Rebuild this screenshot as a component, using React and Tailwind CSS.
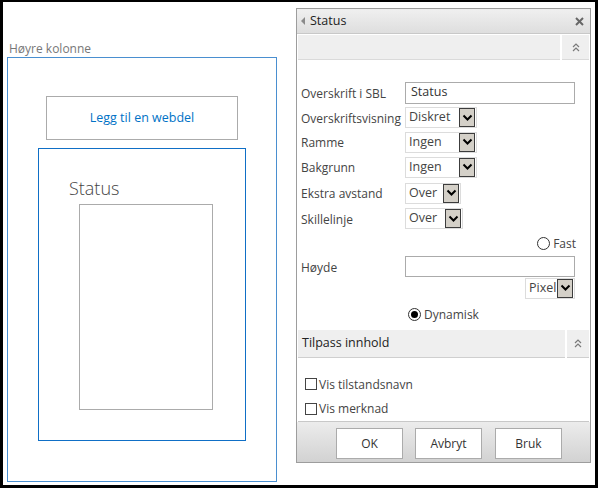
import React from "react";

const F = "font-['Open_Sans',sans-serif]";

function Chevrons() {
  return (
    <svg width="8" height="9" viewBox="0 0 8 9" fill="none" stroke="#7a7a7a" strokeWidth="1.2">
      <polyline points="1,4 4,1 7,4" />
      <polyline points="1,8 4,5 7,8" />
    </svg>
  );
}

function Select({ value, w }) {
  return (
    <div className={`flex h-[21px] items-center border border-[#dcdcdc] bg-white pl-[3px] pr-[1px] ${w}`}>
      <span className="flex-1 text-[12.5px] leading-none text-[#444]">{value}</span>
      <div className="flex h-[19px] w-[16px] items-center justify-center border border-[#3c3c3c] bg-[#d4d0c8]">
        <svg width="11" height="8" viewBox="0 0 11 8" fill="none" stroke="#000" strokeWidth="2">
          <polyline points="1.5,1.5 5.5,5.5 9.5,1.5" />
        </svg>
      </div>
    </div>
  );
}

function Row({ label, h, children }) {
  return (
    <div className={`flex items-center ${h}`}>
      <div className="w-[104px] pl-[4px] pt-[2px] text-[12px] text-[#444] whitespace-nowrap">{label}</div>
      <div className="ml-[4px] flex">{children}</div>
    </div>
  );
}

function Radio({ checked }) {
  return (
    <div className="flex h-[13px] w-[13px] items-center justify-center rounded-full border border-[#333] bg-white">
      {checked && <div className="h-[7px] w-[7px] rounded-full bg-black" />}
    </div>
  );
}

function Check() {
  return <div className="h-[12px] w-[12px] border border-[#444] bg-white" />;
}

function Btn({ children }) {
  return (
    <div className="flex h-[31px] w-[67px] items-center justify-center border border-[#ababab] bg-white text-[12px] text-[#333]">
      {children}
    </div>
  );
}

export default function App() {
  return (
    <div className="h-[488px] w-[598px] bg-black pb-[3px] pl-[3px] pr-[3px] pt-[2px]">
      <div className={`flex h-full w-full bg-white ${F}`}>
        {/* Left column */}
        <div className="ml-[4px] flex w-[270px] flex-none flex-col">
          <div className="ml-[2px] mt-[38px] h-[17px] text-[12px] leading-[17px] text-[#777]">Høyre kolonne</div>
          <div className="flex h-[425px] w-[270px] flex-col border border-[#4a8fd0]">
            <div className="ml-[38px] mt-[38px] flex h-[44px] w-[192px] items-center justify-center border border-[#ababab] text-[12.5px] text-[#0072c6]">
              Legg til en webdel
            </div>
            <div className="ml-[30px] mt-[8px] flex h-[293px] w-[208px] flex-col border border-[#0f6fc6]">
              <div className="ml-[30px] mt-[27px] h-[24px] text-[18px] font-light leading-[24px] text-[#444]">Status</div>
              <div className="ml-[40px] mt-[4px] h-[206px] w-[134px] border border-[#ababab]" />
            </div>
          </div>
        </div>

        {/* Right panel */}
        <div className="ml-[19px] mt-[6px] flex h-[455px] w-[295px] flex-none flex-col border border-[#9d9d9d]">
          <div className="flex h-[25px] items-center border-b border-[#c8c8c8] bg-gradient-to-b from-[#f0f0f0] to-[#dedede]">
            <svg className="ml-[4px]" width="4" height="8" viewBox="0 0 4 8">
              <polygon points="4,0 0,4 4,8" fill="#8a8a8a" />
            </svg>
            <span className="ml-[5px] flex-1 text-[12.5px] text-[#222]">Status</span>
            <svg className="mr-[6px]" width="9" height="9" viewBox="0 0 9 9" stroke="#666" strokeWidth="2">
              <line x1="1" y1="1" x2="8" y2="8" />
              <line x1="8" y1="1" x2="1" y2="8" />
            </svg>
          </div>
          <div className="mx-[1px] mt-[1px] flex h-[25px] gap-[2px]">
            <div className="flex-1 border-b border-[#dadada] bg-[#efefef]" />
            <div className="flex w-[27px] items-center justify-center border-b border-[#dadada] bg-[#efefef]">
              <Chevrons />
            </div>
          </div>

          <div className="mt-[20px] flex flex-col">
            <Row label="Overskrift i SBL" h="h-[25px]">
              <div className="flex h-[22px] w-[170px] items-center border border-[#ababab] pl-[5px] text-[12.5px] text-[#333]">Status</div>
            </Row>
            <Row label="Overskriftsvisning" h="h-[25px]">
              <Select value="Diskret" w="w-[72px]" />
            </Row>
            <Row label="Ramme" h="h-[24px]">
              <Select value="Ingen" w="w-[72px]" />
            </Row>
            <Row label="Bakgrunn" h="h-[26px]">
              <Select value="Ingen" w="w-[72px]" />
            </Row>
            <Row label="Ekstra avstand" h="h-[26px]">
              <Select value="Over" w="w-[56px]" />
            </Row>
            <Row label="Skillelinje" h="h-[25px]">
              <Select value="Over" w="w-[58px]" />
            </Row>
            <div className="flex h-[25px] items-center justify-end pr-[14px]">
              <Radio />
              <span className="ml-[3px] text-[12px] text-[#444]">Fast</span>
            </div>
            <Row label="Høyde" h="h-[21px]">
              <div className="h-[21px] w-[170px] border border-[#ababab]" />
            </Row>
            <div className="flex h-[22px] items-center pl-[228px]">
              <Select value="Pixel" w="w-[50px]" />
            </div>
            <div className="flex h-[31px] items-center pl-[111px]">
              <Radio checked />
              <span className="ml-[3px] text-[12px] text-[#444]">Dynamisk</span>
            </div>
          </div>

          <div className="mx-[1px] flex h-[28px] gap-[2px]">
            <div className="flex flex-1 items-center border-b border-[#cfcfcf] bg-[#efefef] pl-[4px] text-[12.5px] text-[#222]">
              Tilpass innhold
            </div>
            <div className="flex w-[22px] items-center justify-center border-b border-[#cfcfcf] bg-[#efefef]">
              <Chevrons />
            </div>
          </div>

          <div className="mt-[14px] flex h-[24px] items-center pl-[8px]">
            <Check />
            <span className="ml-[2px] pt-[1px] text-[12px] text-[#444]">Vis tilstandsnavn</span>
          </div>
          <div className="flex h-[25px] items-center pl-[8px]">
            <Check />
            <span className="ml-[2px] text-[12px] text-[#444]">Vis merknad</span>
          </div>
          <div className="mx-[1px] h-[1px] bg-[#c8c8c8]" />
          <div className="flex h-[40px] gap-[12px] bg-gradient-to-b from-[#ececec] to-[#d2d2d2] pl-[39px] pt-[6px]">
            <Btn>OK</Btn>
            <Btn>Avbryt</Btn>
            <div className="ml-[1px]">
              <Btn>Bruk</Btn>
            </div>
          </div>
        </div>
      </div>
    </div>
  );
}
